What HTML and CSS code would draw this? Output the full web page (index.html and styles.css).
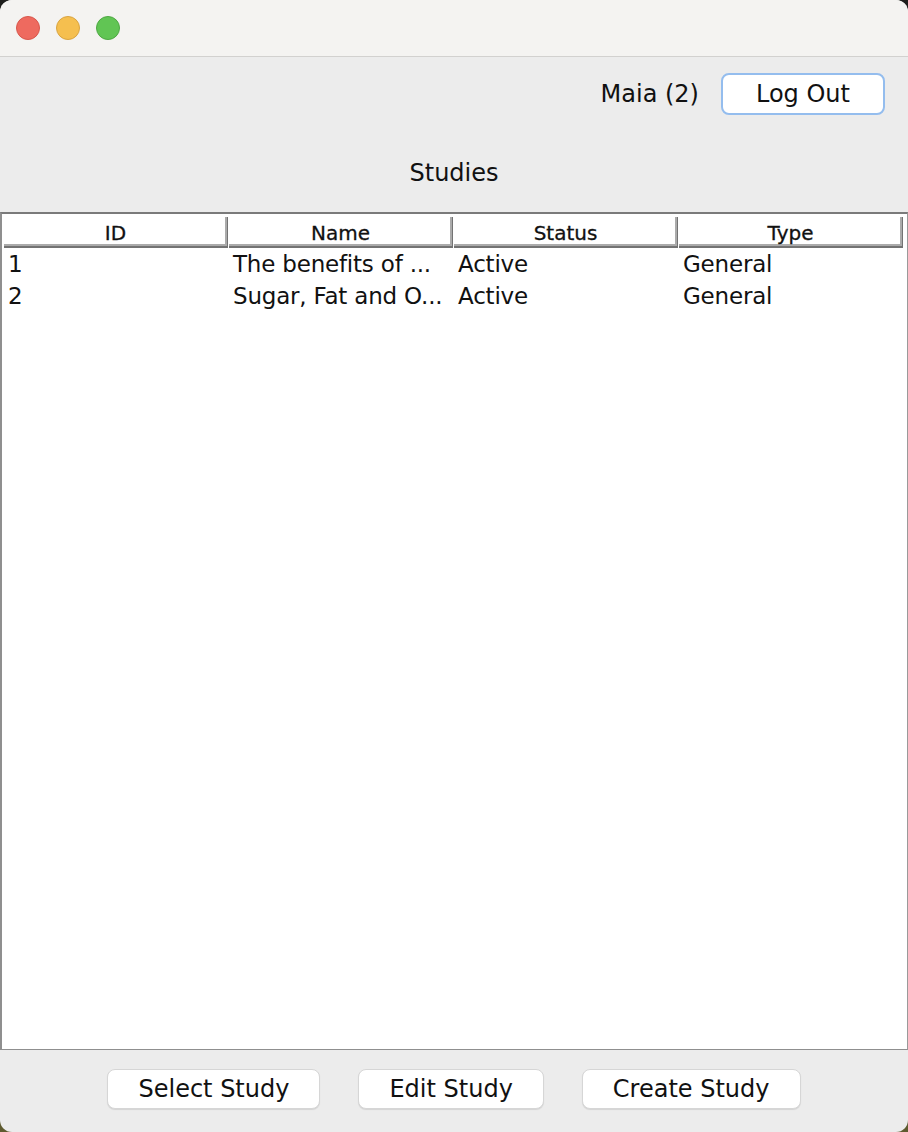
FILE: index.html
```html
<!DOCTYPE html>
<html>
<head>
<meta charset="utf-8">
<link rel="stylesheet" href="styles.css">
</head>
<body>
<div class="window">
  <div class="titlebar">
    <span class="light red"></span>
    <span class="light yellow"></span>
    <span class="light green"></span>
  </div>
  <div class="content">
    <div class="userbar">
      <span class="user">Maia (2)</span>
      <button class="btn focus">Log Out</button>
    </div>
    <div class="title">Studies</div>
    <div class="table">
      <div class="thead">
        <div class="th">ID</div>
        <div class="th">Name</div>
        <div class="th">Status</div>
        <div class="th">Type</div>
      </div>
      <div class="row">
        <div class="td">1</div>
        <div class="td">The benefits of ...</div>
        <div class="td">Active</div>
        <div class="td">General</div>
      </div>
      <div class="row">
        <div class="td">2</div>
        <div class="td">Sugar, Fat and O...</div>
        <div class="td">Active</div>
        <div class="td">General</div>
      </div>
    </div>
    <div class="actions">
      <button class="btn">Select Study</button>
      <button class="btn">Edit Study</button>
      <button class="btn">Create Study</button>
    </div>
  </div>
</div>
</body>
</html>
```
FILE: styles.css
```css
html, body {
  margin: 0;
  padding: 0;
}
body {
  width: 908px;
  height: 1132px;
  background: linear-gradient(#1e1e1c 0%, #2a2a22 60%, #5e5b30 100%);
  font-family: "DejaVu Sans", "Liberation Sans", sans-serif;
  color: #111;
  overflow: hidden;
}
.window {
  width: 908px;
  height: 1132px;
  border-radius: 12px;
  overflow: hidden;
  background: #ececec;
  display: flex;
  flex-direction: column;
}
.titlebar {
  background: #f4f3f1;
  border-bottom: 1px solid #d2d1cf;
  display: flex;
  align-items: center;
  gap: 16px;
  padding-left: 16px;
  box-sizing: border-box;
  height: 57px;
}
.light {
  width: 22px;
  height: 22px;
  border-radius: 50%;
  display: block;
  margin-top: -1px;
}
.red { background: #ee6a5f; border: 1px solid #d8574c; }
.yellow { background: #f5bf4f; border: 1px solid #d9a441; }
.green { background: #61c554; border: 1px solid #4ea843; }
.content {
  flex: 1;
  display: flex;
  flex-direction: column;
  min-height: 0;
}
.userbar {
  display: flex;
  justify-content: flex-end;
  align-items: center;
  gap: 22px;
  padding: 16px 23px 0 0;
}
.user {
  font-size: 24px;
}
.btn {
  font-family: "DejaVu Sans", "Liberation Sans", sans-serif;
  font-size: 24px;
  color: #111;
  background: #fff;
  border: 1px solid #d6d6d6;
  border-radius: 8px;
  height: 40px;
  padding: 0 30px;
  box-shadow: 0 1px 1px rgba(0,0,0,0.1);
  line-height: 1;
}
.btn.focus {
  height: 42px;
  border: 2px solid #94bdee;
  padding: 0 33px;
  box-shadow: none;
}
.title {
  text-align: center;
  font-size: 24px;
  line-height: 28px;
  margin-top: 44px;
}
.table {
  margin-top: 25px;
  flex: 1;
  background: #fff;
  border: 2px solid #8f8f8f;
  border-top-color: #7a7a7a;
  border-bottom-width: 1px;
  border-right-width: 1px;
  border-right-color: #9a9a9a;
  padding: 2px 0 0 2px;
  min-height: 0;
}
.thead, .row {
  display: grid;
  grid-template-columns: 225px 225px 225px 225px;
}
.thead {
  padding-top: 1px;
}
.th {
  height: 31px;
  margin-right: 1px;
  border-right: 1px solid #737373;
  border-bottom: 2px solid #737373;
  box-shadow: inset -2px -2px 0 #ababab;
  box-sizing: border-box;
  font-size: 20px;
  text-align: center;
  line-height: 32px;
  -webkit-text-stroke: 0.3px #111;
}
.td {
  height: 32px;
  line-height: 32px;
  font-size: 23px;
  letter-spacing: -0.2px;
  padding-left: 4px;
  white-space: nowrap;
  overflow: hidden;
}
.actions {
  height: 82px;
  box-sizing: border-box;
  padding-top: 19px;
  display: flex;
  justify-content: center;
  align-items: flex-start;
  gap: 38px;
}
```
